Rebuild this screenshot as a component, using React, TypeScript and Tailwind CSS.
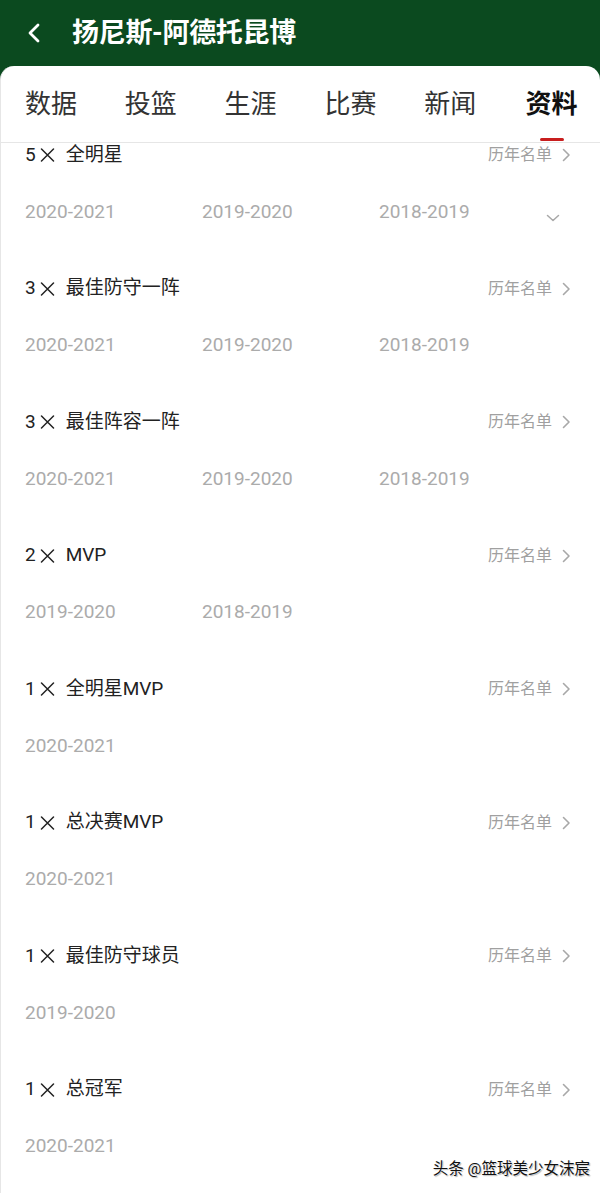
import React from 'react';

interface Honor {
  count: number;
  name: string;
  seasons: string[];
}

const honors: Honor[] = [
  { count: 5, name: '全明星', seasons: ['2020-2021', '2019-2020', '2018-2019'] },
  { count: 3, name: '最佳防守一阵', seasons: ['2020-2021', '2019-2020', '2018-2019'] },
  { count: 3, name: '最佳阵容一阵', seasons: ['2020-2021', '2019-2020', '2018-2019'] },
  { count: 2, name: 'MVP', seasons: ['2019-2020', '2018-2019'] },
  { count: 1, name: '全明星MVP', seasons: ['2020-2021'] },
  { count: 1, name: '总决赛MVP', seasons: ['2020-2021'] },
  { count: 1, name: '最佳防守球员', seasons: ['2019-2020'] },
  { count: 1, name: '总冠军', seasons: ['2020-2021'] },
];

const tabs = ['数据', '投篮', '生涯', '比赛', '新闻', '资料'];

const font = { fontFamily: "Roboto, 'Noto Sans CJK SC', sans-serif" };

const ChevronRight = () => (
  <svg width="9" height="14" viewBox="0 0 9 14" fill="none">
    <path d="M1.5 1.5 L7 7 L1.5 12.5" stroke="#a8a8a8" strokeWidth="1.6" strokeLinecap="round" strokeLinejoin="round" />
  </svg>
);

const Times = () => (
  <svg className="ml-[4px] mr-[11px] shrink-0" width="15" height="14" viewBox="0 0 15 14" fill="none">
    <path d="M1.5 1 L13.5 13 M13.5 1 L1.5 13" stroke="#222" strokeWidth="1.5" strokeLinecap="round" />
  </svg>
);

const HonorRow: React.FC<{ honor: Honor; first: boolean }> = ({ honor, first }) => (
  <div className="relative pb-[52.5px] pl-6 pr-[29px]">
    <div className="flex h-6 items-center justify-between">
      <div className="flex items-center text-[19px] text-[#222]">
        <span>{honor.count}</span>
        <Times />
        <span>{honor.name}</span>
      </div>
      <div className="flex items-center gap-[10px] text-[16px] text-[#a0a0a0]">
        <span>历年名单</span>
        <ChevronRight />
      </div>
    </div>
    <div className="mt-[33px] flex h-6 items-center text-[19px] text-[#ababab]">
      {honor.seasons.map((s) => (
        <span key={s} className="w-[177px] shrink-0">
          {s}
        </span>
      ))}
    </div>
    {first && (
      <svg className="absolute right-[40px] top-[71px]" width="14" height="8" viewBox="0 0 14 8" fill="none">
        <path d="M1.5 1.5 L7 6.5 L12.5 1.5" stroke="#a8a8a8" strokeWidth="1.5" strokeLinecap="round" strokeLinejoin="round" />
      </svg>
    )}
  </div>
);

export default function App() {
  return (
    <div className="relative h-[1193px] w-[600px] overflow-hidden bg-[#0b4a1f]" style={font}>
      {/* Header */}
      <div className="flex h-[66px] items-center pl-[27px]">
        <svg width="14" height="20" viewBox="0 0 14 20" fill="none">
          <path d="M11 2 L3 10 L11 18" stroke="#fff" strokeWidth="2.8" strokeLinecap="round" strokeLinejoin="round" />
        </svg>
        <h1 className="ml-[31px] text-[27px] font-bold tracking-[-0.3px] text-white">扬尼斯-阿德托昆博</h1>
      </div>

      {/* Card */}
      <div className="h-[1127px] rounded-t-[14px] border-l border-[#e6e6e6] bg-white">
        <div className="relative flex h-[77px] border-b border-[#e6e6e6]">
          {tabs.map((t, i) => (
            <div
              key={t}
              className={`flex w-[100px] items-center justify-center text-[26px] ${
                i === tabs.length - 1 ? 'pl-[3px] font-bold text-[#111]' : 'text-[#333]'
              }`}
            >
              {t}
            </div>
          ))}
          <div className="absolute bottom-[1px] left-[539px] h-[3px] w-[24px] rounded-full bg-[#c81e1e]" />
        </div>

        <div>
          {honors.map((h, i) => (
            <HonorRow key={h.name} honor={h} first={i === 0} />
          ))}
        </div>
      </div>

      {/* Watermark */}
      <div
        className="absolute bottom-[12px] right-[10px] text-[15.5px] text-[#111]"
        style={{ textShadow: '0 0 2px #fff, 0 0 2px #fff, 1px 1px 1px #999' }}
      >
        头条 @篮球美少女沫宸
      </div>
    </div>
  );
}
